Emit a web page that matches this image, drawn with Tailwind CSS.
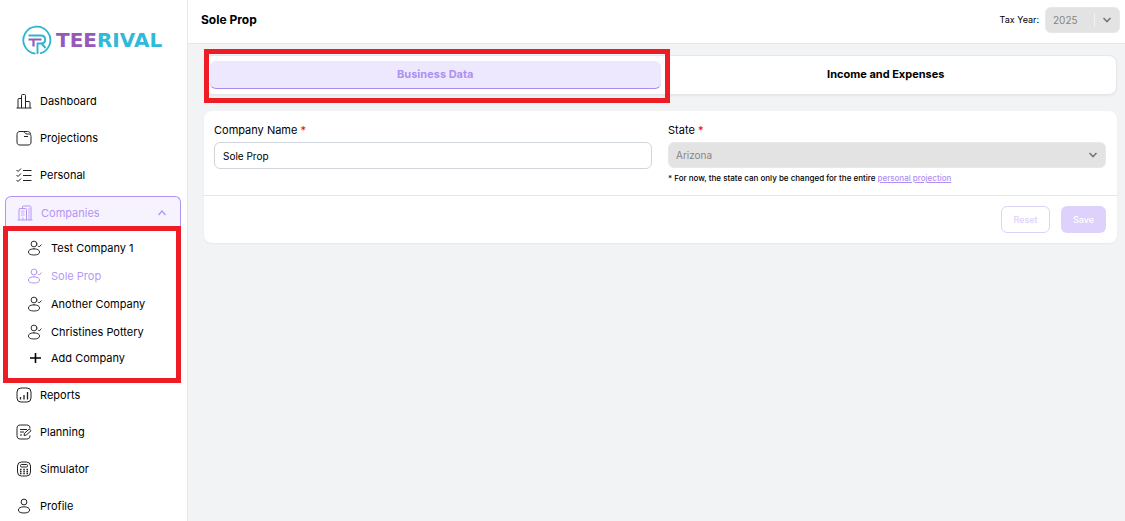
<!DOCTYPE html>
<html lang="en">
<head>
<meta charset="utf-8">
<meta name="viewport" content="width=device-width, initial-scale=1">
<title>Teerival - Sole Prop</title>
<script src="https://cdn.jsdelivr.net/npm/@tailwindcss/browser@4"></script>
</head>
<body class="flex h-screen overflow-hidden bg-[#f2f3f5] font-['Inter','Liberation_Sans',sans-serif] text-[11px] leading-4 text-black">
<svg class="hidden" aria-hidden="true">
  <symbol id="person-check" viewBox="0 0 16 16"><g fill="none" stroke="currentColor" stroke-linecap="round"><circle cx="7" cy="4" r="2.9"/><path d="M7 8.800c3.300 0 5.600 1.300 5.600 3.200S10.300 15 7 15s-5.600-1-5.600-3S3.700 8.800 7 8.800Z"/><path d="m11.200 6 1 1 2-2.200"/></g></symbol>
</svg>
<aside class="flex w-[188px] shrink-0 flex-col border-r border-gray-200 bg-white">
  <a href="#" class="flex h-[82px] shrink-0 items-center pl-[22px] pb-0.5" aria-label="Teerival">
    <svg class="size-[30px] shrink-0" viewBox="0 0 30 30" fill="none" aria-hidden="true">
      <path d="M13.500 28.600A13.500 13.500 0 1 1 18 28.300" stroke="#2cb4d3" stroke-width="1.800"/>
      <path d="M6.500 10.500H19c5.500 0 5.500 8 0 8h-3.500V29M19.500 18.500l4 4.500" stroke="#2cb4d3" stroke-width="1.900"/>
      <path d="M6.500 14.500h13M11.500 15v6.500" stroke="#9658ba" stroke-width="2.200"/>
    </svg>
    <span class="ml-1 font-['DejaVu_Sans',sans-serif] text-[20px] font-bold leading-5 text-[#30b9d9]"><span class="text-[#9658ba]">TEE</span>RIVAL</span>
  </a>
  <nav class="flex flex-col" aria-label="Main">
    <a href="#" class="flex h-[37px] items-center gap-2 pl-4">
      <svg class="size-4" viewBox="0 0 16 16" fill="none" stroke="#222" aria-hidden="true"><path d="M.5 15h15M2 15V6.500q0-1 1-1h2.500M5.500 15V2.500q0-1 1-1h2q1 0 1 1V15M9.500 8.500H13q1 0 1 1V15"/></svg>Dashboard</a>
    <a href="#" class="flex h-[37px] items-center gap-2 pl-4">
      <svg class="size-4" viewBox="0 0 16 16" fill="none" stroke="#222" aria-hidden="true"><path d="M4 1.500h3c2 0 1.800 2.500 4 2.500h1.500c1.700 0 2.500 1 2.500 2.600V12c0 2-1 3-3 3H4c-2 0-3-1-3-3V4.500c0-2 1-3 3-3ZM8 1.500h3.500c1.600 0 3 .8 3.200 3M8 6.500h4"/></svg>Projections</a>
    <a href="#" class="flex h-[37px] items-center gap-2 pl-4">
      <svg class="size-4" viewBox="0 0 16 16" fill="none" stroke="#222" aria-hidden="true"><path d="M7 3.500h8.500M7 8.500h8.500M7 13.500h8.500" stroke-width="1.200"/><path d="m.5 3 1.500 1.500L5 1.500M.5 8 2 9.500l3-3M.5 13 2 14.500l3-3"/></svg>Personal</a>
    <button type="button" aria-expanded="true" class="mx-[5px] mt-[3px] mr-1.5 flex h-[34px] items-center rounded-t-md border border-b-0 border-[#b194f5] bg-[#f6f2fe] pb-px pl-[11px] pr-[13px] text-[#b495f5]">
      <svg class="size-4" viewBox="0 0 16 16" fill="none" stroke="currentColor" aria-hidden="true"><path d="M.5 15h15M2 15V4.500q0-1 1-1h5.500q1 0 1 1V15M5.500 3.500V2q0-1 1-1h6q1.500 0 1.500 1.500V15"/><path d="M4 6h3.500M4 8h3.500M4 10h3.500M5.800 12v3M12 3v12" stroke-opacity=".7"/></svg>
      <span class="ml-2">Companies</span>
      <svg class="ml-auto h-2 w-2.5" viewBox="0 0 10 8" fill="none" stroke="currentColor" stroke-width="1.300" aria-hidden="true"><path d="m1.500 6 3.500-4 3.500 4"/></svg>
    </button>
    <div class="relative pt-1 pb-1.5">
      <a href="#" class="flex h-7 items-center gap-2 pl-[27px]"><svg class="size-4 text-[#333]" aria-hidden="true"><use href="#person-check"/></svg>Test Company 1</a>
      <a href="#" class="flex h-7 items-center gap-2 pl-[27px] text-[#b597f6]" aria-current="page"><svg class="size-4" aria-hidden="true"><use href="#person-check"/></svg>Sole Prop</a>
      <a href="#" class="flex h-7 items-center gap-2 pl-[27px]"><svg class="size-4 text-[#333]" aria-hidden="true"><use href="#person-check"/></svg>Another Company</a>
      <a href="#" class="flex h-7 items-center gap-2 pl-[27px]"><svg class="size-4 text-[#333]" aria-hidden="true"><use href="#person-check"/></svg>Christines Pottery</a>
      <a href="#" class="flex h-6 items-center gap-2 pl-[27px]"><svg class="size-4" viewBox="0 0 16 16" stroke="#000" stroke-width="1.600" aria-hidden="true"><path d="M3 8h11M8.500 3v10"/></svg>Add Company</a>
      <div class="pointer-events-none absolute -top-1 right-1.5 bottom-[-7px] left-[3px] border-5 border-[#ee1c25]"></div>
    </div>
    <a href="#" class="flex h-[37px] items-center gap-2 pl-4">
      <svg class="size-4" viewBox="0 0 16 16" fill="none" stroke="#222" aria-hidden="true"><rect x="1" y="1" width="14" height="14" rx="4"/><path d="M4.500 12.500V10M8 12.500V8M11.500 12.500V5" stroke-width="1.300"/></svg>Reports</a>
    <a href="#" class="flex h-[37px] items-center gap-2 pl-4">
      <svg class="size-4" viewBox="0 0 16 16" fill="none" stroke="#222" aria-hidden="true"><path d="M14 4.500C14 2 13 1 10.500 1h-6C2 1 1 2 1 4.500v7C1 14 2 15 4.500 15h6c2.500 0 3.500-1 3.500-3.500M4 5.500h7M4 8h4M4 11h2"/><path d="m8 11.500.5-2.300 4.800-4.200 1.700 1.800-4.700 4.200Z"/></svg>Planning</a>
    <a href="#" class="flex h-[37px] items-center gap-2 pl-4">
      <svg class="size-4" viewBox="0 0 16 16" fill="none" stroke="#222" aria-hidden="true"><rect x="1.500" y="1" width="13" height="14" rx="4"/><rect x="4.500" y="3.500" width="7" height="2.500" rx="1"/><path d="M4 8.500h1.500M7.300 8.500h1.500M10.500 8.500H12M4 10.500h1.500M7.300 10.500h1.500M10.500 10.500H12M4 12.500h1.500M7.300 12.500h1.500M10.500 12.500H12" stroke-width="1.300"/></svg>Simulator</a>
    <a href="#" class="flex h-[37px] items-center gap-2 pl-4">
      <svg class="size-4" viewBox="0 0 16 16" fill="none" stroke="#222" aria-hidden="true"><circle cx="8" cy="4" r="2.900"/><path d="M8 8.800c3.300 0 5.600 1.300 5.600 3.200S11.300 15 8 15s-5.600-1-5.600-3S4.700 8.800 8 8.800Z"/></svg>Profile</a>
  </nav>
</aside>
<div class="flex min-w-0 flex-1 flex-col">
  <header class="flex h-11 shrink-0 items-center border-b border-gray-200 bg-white pr-[5px] pb-1 pl-[13px]">
    <h1 class="text-xs font-bold">Sole Prop</h1>
    <label for="year" class="ml-auto text-[9px]">Tax Year:</label>
    <div class="relative ml-1.5 w-[75px]">
      <select id="year" disabled class="block h-[26px] w-full appearance-none rounded-md border border-[#e8e8ea] bg-[#e3e3e3] pl-[7px] text-[10px] text-[#858585] opacity-100"><option>2025</option></select>
      <span class="absolute top-1.5 right-[25px] h-[14px] w-px bg-[#f3f3f3]"></span>
      <svg class="pointer-events-none absolute top-[9px] right-2 h-2 w-2.5" viewBox="0 0 10 8" fill="none" stroke="#777" stroke-width="1.600" aria-hidden="true"><path d="m1.500 2 3.500 3.500L8.500 2"/></svg>
    </div>
  </header>
  <main class="flex flex-col gap-4 pt-[11px] pr-2 pl-4">
    <div class="relative">
      <div role="tablist" class="grid grid-cols-2 rounded-lg border border-gray-200 bg-white p-[5px] shadow-xs">
        <button type="button" role="tab" aria-selected="true" class="h-7 rounded-md border-b border-[#a98af2] bg-[#ede8fd] pb-px text-[11px] font-bold text-[#ae8ff5]">Business Data</button>
        <button type="button" role="tab" aria-selected="false" class="h-7 pb-0.5 text-[11px] font-bold">Income and Expenses</button>
      </div>
      <div class="pointer-events-none absolute -top-1.5 -bottom-2 left-0 w-[51%] border-5 border-[#ee1c25]"></div>
    </div>
    <form class="rounded-lg bg-white shadow-xs">
      <div class="grid h-[84px] grid-cols-2 gap-4 pt-[11px] pr-[11px] pl-2.5">
        <div>
          <label for="company" class="block">Company Name <span class="text-red-600">*</span></label>
          <input id="company" type="text" value="Sole Prop" class="mt-1 h-[27px] w-full rounded-md border border-gray-300 bg-white px-2 text-[10px]">
        </div>
        <div>
          <label for="state" class="block">State <span class="text-red-600">*</span></label>
          <div class="relative mt-1">
            <select id="state" disabled class="block h-[26px] w-full appearance-none rounded-md border border-[#e8e8ea] bg-[#e3e3e3] px-[7px] text-[10px] text-[#858585] opacity-100"><option>Arizona</option></select>
            <svg class="pointer-events-none absolute top-[9px] right-2 h-2 w-2.5" viewBox="0 0 10 8" fill="none" stroke="#777" stroke-width="1.600" aria-hidden="true"><path d="m1.500 2 3.500 3.500L8.500 2"/></svg>
          </div>
          <p class="mt-1 text-[8px] font-medium leading-3">* For now, the state can only be changed for the entire <a href="#" class="text-[#b08ff5] underline">personal projection</a></p>
        </div>
      </div>
      <div class="flex justify-end gap-[11px] border-t border-gray-200 px-[11px] py-2.5">
        <button type="reset" disabled class="h-[27px] w-[49px] rounded-md border border-[#ded1fb] bg-white text-[9px] font-medium text-[#ded1fb]">Reset</button>
        <button type="submit" disabled class="h-[27px] w-[45px] rounded-md bg-[#ded1fb] text-[9px] font-medium text-white">Save</button>
      </div>
    </form>
  </main>
</div>
</body>
</html>
